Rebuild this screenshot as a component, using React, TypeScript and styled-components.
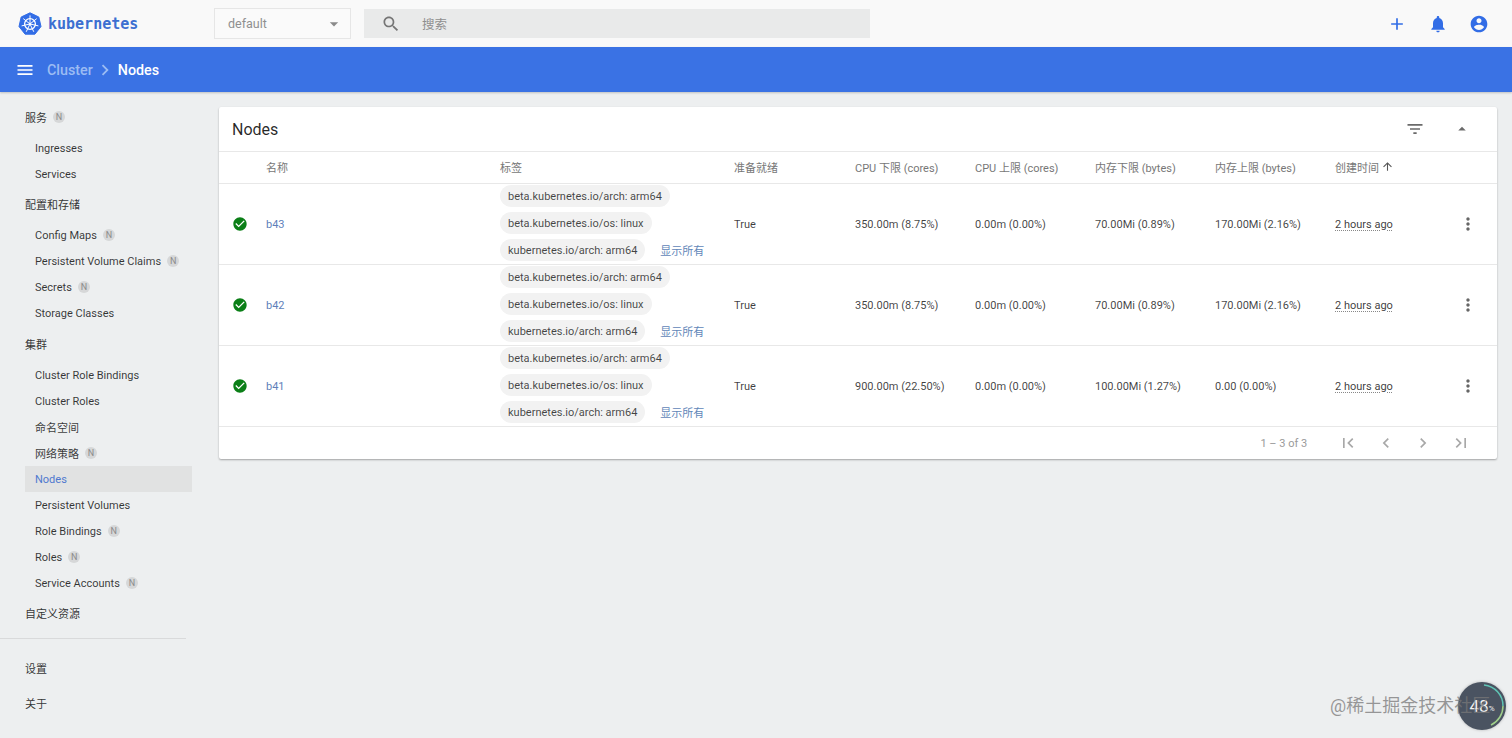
import React from "react";
import styled, { createGlobalStyle } from "styled-components";

const Global = createGlobalStyle`
  html, body { margin: 0; padding: 0; height: 738px; overflow: hidden; background: #edeff0; }
  body { font-family: Roboto, "Noto Sans CJK SC", sans-serif; color: rgba(0,0,0,.82); font-size: 11px; }
  * { box-sizing: border-box; }
`;

const P = {
  menu: "M3 18h18v-2H3v2zm0-5h18v-2H3v2zm0-7v2h18V6H3z",
  search: "M15.5 14h-.79l-.28-.27C15.41 12.59 16 11.11 16 9.5 16 5.91 13.09 3 9.5 3S3 5.91 3 9.5 5.91 16 9.5 16c1.61 0 3.09-.59 4.23-1.57l.27.28v.79l5 4.99L20.49 19l-4.99-5zm-6 0C7.01 14 5 11.99 5 9.5S7.01 5 9.5 5 14 7.01 14 9.5 11.99 14 9.5 14z",
  add: "M19 13h-6v6h-2v-6H5v-2h6V5h2v6h6v2z",
  bell: "M12 22c1.1 0 2-.9 2-2h-4c0 1.1.89 2 2 2zm6-6v-5c0-3.07-1.64-5.64-4.5-6.32V4c0-.83-.67-1.5-1.5-1.5s-1.5.67-1.5 1.5v.68C7.63 5.36 6 7.92 6 11v5l-2 2v1h16v-1l-2-2z",
  account: "M12 2C6.48 2 2 6.48 2 12s4.48 10 10 10 10-4.48 10-10S17.52 2 12 2zm0 3c1.66 0 3 1.34 3 3s-1.34 3-3 3-3-1.34-3-3 1.34-3 3-3zm0 14.2c-2.5 0-4.71-1.28-6-3.22.03-1.99 4-3.08 6-3.08 1.99 0 5.97 1.09 6 3.08-1.29 1.94-3.5 3.22-6 3.22z",
  filter: "M10 18h4v-2h-4v2zM3 6v2h18V6H3zm3 7h12v-2H6v2z",
  dropUp: "M7 14l5-5 5 5z",
  dropDown: "M7 10l5 5 5-5z",
  more: "M12 8c1.1 0 2-.9 2-2s-.9-2-2-2-2 .9-2 2 .9 2 2 2zm0 2c-1.1 0-2 .9-2 2s.9 2 2 2 2-.9 2-2-.9-2-2-2zm0 6c-1.1 0-2 .9-2 2s.9 2 2 2 2-.9 2-2-.9-2-2-2z",
  check: "M12 2C6.48 2 2 6.48 2 12s4.48 10 10 10 10-4.48 10-10S17.52 2 12 2zm-2 15l-5-5 1.41-1.41L10 14.17l7.59-7.59L19 8l-9 9z",
  up: "M4 12l1.41 1.41L11 7.83V20h2V7.83l5.58 5.59L20 12l-8-8-8 8z",
  first: "M18.41 16.59L13.82 12l4.59-4.59L17 6l-6 6 6 6zM6 6h2v12H6z",
  prev: "M15.41 7.41L14 6l-6 6 6 6 1.41-1.41L10.83 12z",
  next: "M10 6L8.59 7.41 13.17 12l-4.58 4.59L10 18l6-6z",
  last: "M5.59 7.41L10.18 12l-4.59 4.59L7 18l6-6-6-6zM16 6h2v12h-2z",
  chevron: "M10 6L8.59 7.41 13.17 12l-4.58 4.59L10 18l6-6z",
};

const Icon = ({ d, size = 24, color = "currentColor" }: { d: string; size?: number; color?: string }) => (
  <svg width={size} height={size} viewBox="0 0 24 24" fill={color} style={{ display: "block", flex: "none" }}>
    <path d={d} />
  </svg>
);

const Logo = () => (
  <svg width="24" height="24" viewBox="0 0 24 24" style={{ display: "block", flex: "none" }}>
    <polygon points="12,0.8 20.8,5 23,14.5 16.9,22.2 7.1,22.2 1,14.5 3.2,5" fill="#326de6" stroke="#326de6" strokeWidth="1" strokeLinejoin="round" />
    <circle cx="12" cy="12" r="5.4" fill="none" stroke="#fff" strokeWidth="1.3" />
    <circle cx="12" cy="12" r="1.2" fill="#fff" />
    <g stroke="#fff" strokeWidth="1" strokeLinecap="round">
      <line x1="12" y1="12" x2="12" y2="3.8" />
      <line x1="12" y1="12" x2="18.4" y2="6.9" />
      <line x1="12" y1="12" x2="20" y2="13.8" />
      <line x1="12" y1="12" x2="15.6" y2="19.4" />
      <line x1="12" y1="12" x2="8.4" y2="19.4" />
      <line x1="12" y1="12" x2="4" y2="13.8" />
      <line x1="12" y1="12" x2="5.6" y2="6.9" />
    </g>
  </svg>
);

const TopBar = styled.header`
  height: 47px;
  background: #f9f9f9;
  display: flex;
  align-items: center;
  padding: 0 23px 0 18px;
`;
const Brand = styled.div`
  width: 196px;
  display: flex;
  align-items: center;
  gap: 6px;
`;
const BrandName = styled.span`
  font-family: "DejaVu Sans Mono", monospace;
  font-weight: 700;
  font-size: 15px;
  color: #3c6fd1;
`;
const NsSelect = styled.div`
  width: 137px;
  height: 31px;
  border: 1px solid #e6e6e6;
  background: #fafafa;
  display: flex;
  align-items: center;
  justify-content: space-between;
  padding: 0 6px 0 13px;
  font-size: 12.5px;
  color: #8f8f8f;
`;
const SearchBox = styled.div`
  margin-left: 13px;
  width: 506px;
  height: 29px;
  background: #e9eaea;
  display: flex;
  align-items: center;
  padding-left: 17px;
  gap: 21px;
  color: #757575;
  font-size: 12.5px;
`;
const SearchHint = styled.span`
  color: #8f8f8f;
`;
const TopActions = styled.div`
  margin-left: auto;
  display: flex;
  gap: 21px;
  color: #326de6;
`;
const BlueBar = styled.div`
  height: 45px;
  background: #3a72e4;
  box-shadow: 0 1px 2px rgba(0,0,0,.2);
  display: flex;
  align-items: center;
  padding-left: 15px;
  color: #fff;
  font-size: 14.3px;
  font-weight: 500;
  position: relative;
`;
const Crumb = styled.span`
  margin-left: 12px;
  color: #9cbcf3;
`;
const Chevron = styled.span`
  margin: 0 2px 0 1px;
  color: #9cbcf3;
`;
const Current = styled.span`
  color: #fff;
`;

const Body = styled.div`
  display: flex;
  align-items: flex-start;
`;
const Sidebar = styled.nav`
  width: 204px;
  flex: none;
  padding-top: 10px;
`;
const SectionHead = styled.div<{ $gapAbove?: number }>`
  height: 30px;
  margin-top: ${(p) => p.$gapAbove ?? 0}px;
  padding-left: 25px;
  display: flex;
  align-items: center;
  font-size: 11px;
  gap: 6px;
  color: rgba(0,0,0,.8);
`;
const Group = styled.div`
  margin: 3px 0 2px;
`;
const Item = styled.div<{ $active?: boolean }>`
  height: 26px;
  margin-left: 25px;
  width: 167px;
  padding-left: 10px;
  display: flex;
  align-items: center;
  gap: 6px;
  font-size: 11px;
  color: ${(p) => (p.$active ? "#4f79cf" : "rgba(0,0,0,.78)")};
  background: ${(p) => (p.$active ? "#e1e2e2" : "transparent")};
`;
const Badge = styled.span`
  width: 12px;
  height: 12px;
  border-radius: 50%;
  background: #d6d7d8;
  color: #8b8b8b;
  font-size: 9px;
  display: flex;
  align-items: center;
  justify-content: center;
`;
const Divider = styled.hr`
  border: 0;
  height: 1px;
  width: 186px;
  margin: 10px 0 14px;
  background: #d9dadb;
`;
const FootLink = styled(SectionHead)`
  margin-bottom: 5px;
`;

const Main = styled.main`
  flex: 1;
  padding: 15px 15px;
`;
const Card = styled.section`
  background: #fff;
  box-shadow: 0 1px 2px rgba(0,0,0,.32);
  border-radius: 2px;
`;
const CardHead = styled.div`
  height: 45px;
  border-bottom: 1px solid #e8e8e8;
  display: flex;
  align-items: center;
  padding: 0 26px 0 13px;
`;
const CardTitle = styled.h2`
  margin: 0;
  font-size: 16px;
  font-weight: 400;
  color: rgba(0,0,0,.85);
  flex: 1;
`;
const HeadIcons = styled.div`
  display: flex;
  align-items: center;
  gap: 28px;
  color: #6a6a6a;
`;
const Columns = "47px 234px 234px 121px 120px 120px 120px 120px 110px 1fr";
const TableHead = styled.div`
  height: 32px;
  padding-bottom: 2px;
  border-bottom: 1px solid #e8e8e8;
  display: grid;
  grid-template-columns: ${Columns};
  align-items: center;
  font-size: 11px;
  color: #8a8a8a;
`;
const HeadCell = styled.div`
  display: flex;
  align-items: center;
  gap: 2px;
  white-space: nowrap;
  color: #777;
`;
const Row = styled.div`
  height: 81px;
  border-bottom: 1px solid #e8e8e8;
  display: grid;
  grid-template-columns: ${Columns};
  align-items: center;
  font-size: 11px;
  color: rgba(0,0,0,.75);
`;
const StatusCell = styled.div`
  display: flex;
  justify-content: center;
  padding-right: 6px;
  color: #0b7f17;
`;
const NameLink = styled.a`
  color: #5f7fba;
`;
const Labels = styled.div`
  display: flex;
  flex-direction: column;
  align-items: flex-start;
  gap: 5px;
  padding-bottom: 2px;
`;
const ChipLine = styled.div`
  display: flex;
  align-items: center;
  gap: 15px;
`;
const Chip = styled.span`
  height: 22px;
  padding: 0 8px;
  border-radius: 11px;
  background: #f2f2f2;
  display: flex;
  align-items: center;
  color: rgba(0,0,0,.72);
  white-space: nowrap;
`;
const ShowAll = styled.a`
  color: #5f86b8;
  font-size: 11px;
`;
const Time = styled.span`
  text-decoration: underline dotted #888;
  text-underline-offset: 2px;
  white-space: nowrap;
  color: rgba(0,0,0,.78);
`;
const MenuCell = styled.div`
  display: flex;
  padding-left: 13px;
  color: #666;
`;
const Footer = styled.div`
  height: 32px;
  display: flex;
  align-items: center;
  justify-content: flex-end;
  padding-right: 26px;
  color: #9a9a9a;
  font-size: 11px;
`;
const RangeText = styled.span`
  margin-right: 31px;
`;
const Pager = styled.div`
  display: flex;
  gap: 17.6px;
  color: #a8a8a8;
`;
const Watermark = styled.div`
  position: absolute;
  left: 1330px;
  top: 695px;
  font-size: 18px;
  line-height: 22px;
  color: rgba(120,120,120,.75);
  white-space: nowrap;
`;
const Speed = styled.div`
  position: absolute;
  left: 1458px;
  top: 682px;
  width: 48px;
  height: 48px;
  border-radius: 50%;
  background: #4a5361;
  box-shadow: 0 0 3px rgba(0,0,0,.25);
  color: #f2f2f2;
  display: flex;
  align-items: center;
  justify-content: center;
  font-size: 17px;
`;
const SpeedArc = styled.svg`
  position: absolute;
  inset: 0;
`;
const Pct = styled.small`
  font-size: 8px;
  align-self: center;
  margin-top: 4px;
`;

const nodes = [
  { n: "b43", a: "350.00m (8.75%)", b: "0.00m (0.00%)", c: "70.00Mi (0.89%)", d: "170.00Mi (2.16%)" },
  { n: "b42", a: "350.00m (8.75%)", b: "0.00m (0.00%)", c: "70.00Mi (0.89%)", d: "170.00Mi (2.16%)" },
  { n: "b41", a: "900.00m (22.50%)", b: "0.00m (0.00%)", c: "100.00Mi (1.27%)", d: "0.00 (0.00%)" },
];

const NavItem = ({ t, n, active }: { t: string; n?: boolean; active?: boolean }) => (
  <Item $active={active}>
    {t}
    {n && <Badge>N</Badge>}
  </Item>
);

export default function App() {
  return (
    <>
      <Global />
      <TopBar>
        <Brand>
          <Logo />
          <BrandName>kubernetes</BrandName>
        </Brand>
        <NsSelect>
          default
          <Icon d={P.dropDown} size={20} color="#8a8a8a" />
        </NsSelect>
        <SearchBox>
          <Icon d={P.search} size={20} />
          <SearchHint>搜索</SearchHint>
        </SearchBox>
        <TopActions>
          <Icon d={P.add} size={20} />
          <Icon d={P.bell} size={20} />
          <Icon d={P.account} size={20} />
        </TopActions>
      </TopBar>
      <BlueBar>
        <Icon d={P.menu} size={20} />
        <Crumb>Cluster</Crumb>
        <Chevron><Icon d={P.chevron} size={22} /></Chevron>
        <Current>Nodes</Current>
      </BlueBar>
      <Body>
        <Sidebar>
          <SectionHead>服务 <Badge>N</Badge></SectionHead>
          <Group>
            <NavItem t="Ingresses" />
            <NavItem t="Services" />
          </Group>
          <SectionHead>配置和存储</SectionHead>
          <Group>
            <NavItem t="Config Maps" n />
            <NavItem t="Persistent Volume Claims" n />
            <NavItem t="Secrets" n />
            <NavItem t="Storage Classes" />
          </Group>
          <SectionHead $gapAbove={3}>集群</SectionHead>
          <Group>
            <NavItem t="Cluster Role Bindings" />
            <NavItem t="Cluster Roles" />
            <NavItem t="命名空间" />
            <NavItem t="网络策略" n />
            <NavItem t="Nodes" active />
            <NavItem t="Persistent Volumes" />
            <NavItem t="Role Bindings" n />
            <NavItem t="Roles" n />
            <NavItem t="Service Accounts" n />
          </Group>
          <SectionHead>自定义资源</SectionHead>
          <Divider />
          <FootLink>设置</FootLink>
          <FootLink>关于</FootLink>
        </Sidebar>
        <Main>
          <Card>
            <CardHead>
              <CardTitle>Nodes</CardTitle>
              <HeadIcons>
                <Icon d={P.filter} size={20} />
                <Icon d={P.dropUp} size={18} />
              </HeadIcons>
            </CardHead>
            <TableHead>
              <div />
              <HeadCell>名称</HeadCell>
              <HeadCell>标签</HeadCell>
              <HeadCell>准备就绪</HeadCell>
              <HeadCell>CPU 下限 (cores)</HeadCell>
              <HeadCell>CPU 上限 (cores)</HeadCell>
              <HeadCell>内存下限 (bytes)</HeadCell>
              <HeadCell>内存上限 (bytes)</HeadCell>
              <HeadCell>创建时间 <Icon d={P.up} size={13} color="#555" /></HeadCell>
              <div />
            </TableHead>
            {nodes.map((r) => (
              <Row key={r.n}>
                <StatusCell><Icon d={P.check} size={16} /></StatusCell>
                <div><NameLink>{r.n}</NameLink></div>
                <Labels>
                  <Chip>beta.kubernetes.io/arch: arm64</Chip>
                  <Chip>beta.kubernetes.io/os: linux</Chip>
                  <ChipLine>
                    <Chip>kubernetes.io/arch: arm64</Chip>
                    <ShowAll>显示所有</ShowAll>
                  </ChipLine>
                </Labels>
                <div>True</div>
                <div>{r.a}</div>
                <div>{r.b}</div>
                <div>{r.c}</div>
                <div>{r.d}</div>
                <div><Time>2 hours ago</Time></div>
                <MenuCell><Icon d={P.more} size={20} /></MenuCell>
              </Row>
            ))}
            <Footer>
              <RangeText>1 – 3 of 3</RangeText>
              <Pager>
                <Icon d={P.first} size={20} />
                <Icon d={P.prev} size={20} />
                <Icon d={P.next} size={20} />
                <Icon d={P.last} size={20} />
              </Pager>
            </Footer>
          </Card>
        </Main>
      </Body>
      <Speed>
        <SpeedArc width="48" height="48" viewBox="0 0 48 48">
          <path d="M26 3 A21 21 0 0 1 45 24" fill="none" stroke="#5fc4b5" strokeWidth="1.5" />
          <path d="M45 24 A21 21 0 0 1 33 43" fill="none" stroke="#9fd08a" strokeWidth="1.5" />
        </SpeedArc>
        48<Pct>%</Pct>
      </Speed>
      <Watermark>@稀土掘金技术社区</Watermark>
    </>
  );
}
